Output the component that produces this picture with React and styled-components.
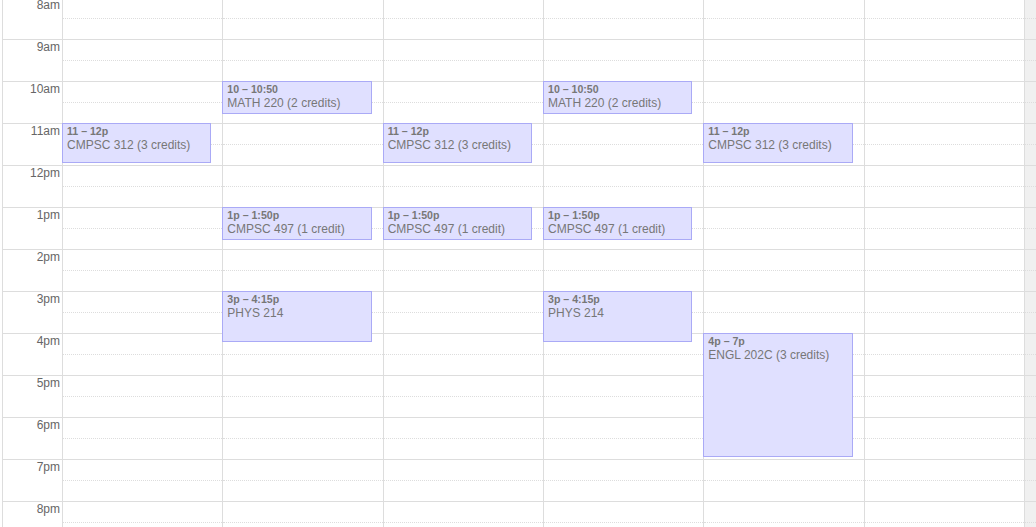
import styled, { createGlobalStyle } from 'styled-components';

const GlobalStyle = createGlobalStyle`
  html, body {
    margin: 0;
    padding: 0;
    background: #fff;
    overflow: hidden;
  }
  body {
    font-family: 'Liberation Sans', Arial, sans-serif;
  }
`

const HOUR = 42
const START = 8

const Page = styled.div`
  padding-left: 2px;
  height: 100vh;
  overflow: hidden;
`

const Grid = styled.div`
  position: relative;
  margin-top: -3px;
  border-left: 1px solid #ddd;
`

const Row = styled.div`
  display: grid;
  grid-template-columns: 59px repeat(6, 1fr) 12px;
  border-top: 1px solid #ddd;
  height: 41px;
`

const Axis = styled.div`
  text-align: right;
  padding: 0 2px 0 0;
  font-size: 12px;
  line-height: 14px;
  color: #666;
`

const Day = styled.div`
  border-left: 1px solid #ddd;
  display: flex;
  flex-direction: column;
`

const Half = styled.div`
  height: 20px;
  border-top: ${p => (p.$dotted ? '1px dotted #ddd' : 'none')};
`

const Gutter = styled.div`
  border-left: 1px solid #ddd;
  background: #f0f0f0;
  display: flex;
  flex-direction: column;
`

const Overlay = styled.div`
  position: absolute;
  inset: 0;
  display: grid;
  grid-template-columns: 59px repeat(6, 1fr) 12px;
  pointer-events: none;
`

const EventCol = styled.div`
  position: relative;
`

const Event = styled.div`
  position: absolute;
  left: 0;
  width: calc(100% - 11px);
  box-sizing: border-box;
  background: #e0e0ff;
  border: 1px solid #aaaaf6;
  padding: 1px 4px 0;
  color: #777;
  overflow: hidden;
`

const Time = styled.div`
  font-size: 10.6px;
  line-height: 13px;
  font-weight: bold;
  white-space: nowrap;
`

const Title = styled.div`
  font-size: 12px;
  line-height: 15px;
  white-space: nowrap;
`

const hours = ['8am', '9am', '10am', '11am', '12pm', '1pm', '2pm', '3pm', '4pm', '5pm', '6pm', '7pm', '8pm']

const cmpsc312 = { start: 11, end: 12, time: '11 – 12p', title: 'CMPSC 312 (3 credits)' }
const math220 = { start: 10, end: 10 + 50 / 60, time: '10 – 10:50', title: 'MATH 220 (2 credits)' }
const cmpsc497 = { start: 13, end: 13 + 50 / 60, time: '1p – 1:50p', title: 'CMPSC 497 (1 credit)' }
const phys214 = { start: 15, end: 16.25, time: '3p – 4:15p', title: 'PHYS 214' }
const engl202 = { start: 16, end: 19, time: '4p – 7p', title: 'ENGL 202C (3 credits)' }

const days = [
  [cmpsc312],
  [math220, cmpsc497, phys214],
  [cmpsc312, cmpsc497],
  [math220, cmpsc497, phys214],
  [cmpsc312, engl202],
  [],
]

function App() {
  return (
    <Page>
      <GlobalStyle />
      <Grid>
        {hours.map(h => (
          <Row key={h}>
            <Axis>{h}</Axis>
            {days.map((_, i) => (
              <Day key={i}>
                <Half />
                <Half $dotted />
              </Day>
            ))}
            <Gutter>
              <Half />
              <Half $dotted />
            </Gutter>
          </Row>
        ))}
        <Overlay>
          <div />
          {days.map((events, i) => (
            <EventCol key={i}>
              {events.map(ev => (
                <Event
                  key={ev.time + ev.title}
                  style={{
                    top: (ev.start - START) * HOUR,
                    height: (ev.end - ev.start) * HOUR - 2,
                  }}
                >
                  <Time>{ev.time}</Time>
                  <Title>{ev.title}</Title>
                </Event>
              ))}
            </EventCol>
          ))}
        </Overlay>
      </Grid>
    </Page>
  );
}

export default App;
